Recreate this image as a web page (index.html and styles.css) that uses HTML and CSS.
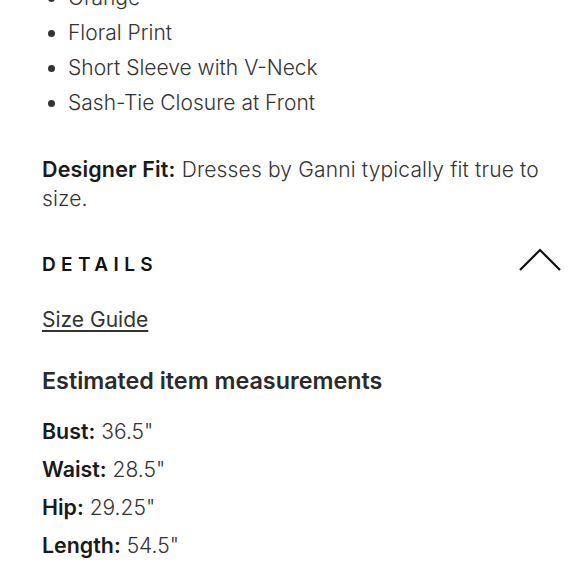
FILE: index.html
```html
<!DOCTYPE html>
<html>
<head>
<meta charset="utf-8">
<link rel="stylesheet" href="styles.css">
</head>
<body>
<div class="page">
  <ul class="features">
    <li>Orange</li>
    <li>Floral Print</li>
    <li>Short Sleeve with V-Neck</li>
    <li>Sash-Tie Closure at Front</li>
  </ul>
  <p class="fit"><b>Designer Fit:</b> Dresses by Ganni typically fit true to size.</p>
  <div class="section-head">
    <span class="section-title">DETAILS</span>
    <svg class="chevron" width="44" height="26" viewBox="0 0 44 26"><polyline points="2,23 22,3 42,23" fill="none" stroke="#111" stroke-width="2.2"/></svg>
  </div>
  <a class="size-guide" href="#">Size Guide</a>
  <h3 class="measure-title">Estimated item measurements</h3>
  <div class="measures">
    <div class="m"><b>Bust:</b> 36.5"</div>
    <div class="m"><b>Waist:</b> 28.5"</div>
    <div class="m"><b>Hip:</b> 29.25"</div>
    <div class="m"><b>Length:</b> 54.5"</div>
  </div>
</div>
</body>
</html>
```
FILE: styles.css
```css
html, body {
  margin: 0;
  padding: 0;
  background: #fff;
}
body {
  font-family: Inter, "Noto Sans", sans-serif;
  font-size: 21px;
  font-weight: 350;
  color: #333;
  overflow: hidden;
}
.page {
  padding: 0 20px 0 42px;
  margin-top: -20px;
}
.features {
  margin: 0;
  padding: 0 0 0 26px;
  line-height: 35px;
}
.fit {
  margin: 35px 0 0;
  line-height: 29px;
  letter-spacing: 0.15px;
}
.fit b {
  color: #1a1a1a;
  font-weight: 600;
  font-size: 21.5px;
  line-height: 20px;
}
.section-head {
  display: flex;
  justify-content: space-between;
  align-items: center;
  margin-top: 36px;
  height: 30px;
}
.section-title {
  font-size: 19px;
  font-weight: 600;
  letter-spacing: 5.4px;
  color: #111;
}
.chevron {
  margin-right: -2px;
  margin-top: -8px;
}
.size-guide {
  display: block;
  width: max-content;
  margin-top: 26px;
  line-height: 30px;
  color: #333;
  font-weight: 400;
  text-decoration: underline;
  text-underline-offset: 3px;
  text-decoration-thickness: 1.5px;
}
.measure-title {
  margin: 31px 0 0;
  font-size: 23.3px;
  font-weight: 600;
  line-height: 30px;
  color: #2a2a2a;
}
.measures {
  margin-top: 17px;
  display: flex;
  flex-direction: column;
}
.m {
  height: 38px;
  line-height: 38px;
  white-space: nowrap;
}
.m b {
  font-weight: 600;
  font-size: 21.4px;
  line-height: 20px;
  color: #1a1a1a;
}
```
